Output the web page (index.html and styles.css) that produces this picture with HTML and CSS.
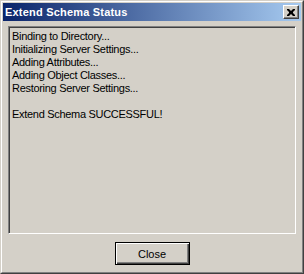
FILE: index.html
```html
<!DOCTYPE html>
<html lang="en">
<head>
    <meta charset="UTF-8">
    <title>Extend Schema Status</title>
    <link rel="stylesheet" href="styles.css">
</head>
<body>
    <div class="window">
        <div class="frame">
            <div class="title-bar">
                <span class="title">Extend Schema Status</span>
                <button class="title-close" aria-label="Close">
                    <svg width="8" height="7" viewBox="0 0 8 7">
                        <path d="M0 0h2l2 2 2-2h2v1l-2 2v1l2 2v1h-2l-2-2-2 2h-2v-1l2-2v-1l-2-2z" fill="#000"/>
                    </svg>
                </button>
            </div>
            <div class="client">
                <div class="status-box">
                    <div>Binding to Directory...</div>
                    <div>Initializing Server Settings...</div>
                    <div>Adding Attributes...</div>
                    <div>Adding Object Classes...</div>
                    <div>Restoring Server Settings...</div>
                    <div>&nbsp;</div>
                    <div>Extend Schema SUCCESSFUL!</div>
                </div>
                <div class="actions">
                    <button class="btn-default">Close</button>
                </div>
            </div>
        </div>
    </div>
</body>
</html>
```

FILE: styles.css
```css
html, body {
    margin: 0;
    padding: 0;
    width: 304px;
    height: 274px;
    overflow: hidden;
    background: #d4d0c8;
}

.window {
    box-sizing: border-box;
    width: 304px;
    height: 274px;
    border: 1px solid;
    border-color: #d4d0c8 #404040 #404040 #d4d0c8;
    background: #d4d0c8;
}

.frame {
    box-sizing: border-box;
    height: 100%;
    border: 1px solid;
    border-color: #ffffff #808080 #808080 #ffffff;
    padding: 1px;
    display: flex;
    flex-direction: column;
}

.title-bar {
    height: 18px;
    background: linear-gradient(to right, #0a246a, #a6caf0);
    display: flex;
    align-items: center;
    justify-content: space-between;
    padding: 0 2px 0 2px;
}

.title {
    color: #ffffff;
    font-family: "Liberation Sans", Arial, sans-serif;
    font-weight: bold;
    font-size: 11px;
    letter-spacing: 0.2px;
}

.title-close {
    box-sizing: border-box;
    width: 16px;
    height: 14px;
    padding: 0;
    background: #d4d0c8;
    border: 1px solid;
    border-color: #ffffff #404040 #404040 #ffffff;
    box-shadow: inset -1px -1px 0 #808080;
    display: flex;
    align-items: center;
    justify-content: center;
}

.client {
    flex: 1;
    display: flex;
    flex-direction: column;
    padding: 5px 5px 6px 5px;
}

.status-box {
    flex: 1;
    border: 1px solid;
    border-color: #808080 #ffffff #ffffff #808080;
    box-shadow: inset 1px 1px 0 #404040, inset -1px -1px 0 #d4d0c8;
    padding: 3px 3px;
    font-family: "Liberation Sans", Arial, sans-serif;
    font-size: 11px;
    line-height: 13px;
    letter-spacing: -0.3px;
    color: #000000;
}

.actions {
    display: flex;
    justify-content: center;
    padding-top: 8px;
}

.btn-default {
    box-sizing: border-box;
    width: 75px;
    height: 23px;
    padding: 0;
    background: #d4d0c8;
    border: 1px solid #000000;
    box-shadow: inset 1px 1px 0 #ffffff, inset -1px -1px 0 #404040, inset -2px -2px 0 #808080;
    font-family: "Liberation Sans", Arial, sans-serif;
    font-size: 11px;
    color: #000000;
}
```
